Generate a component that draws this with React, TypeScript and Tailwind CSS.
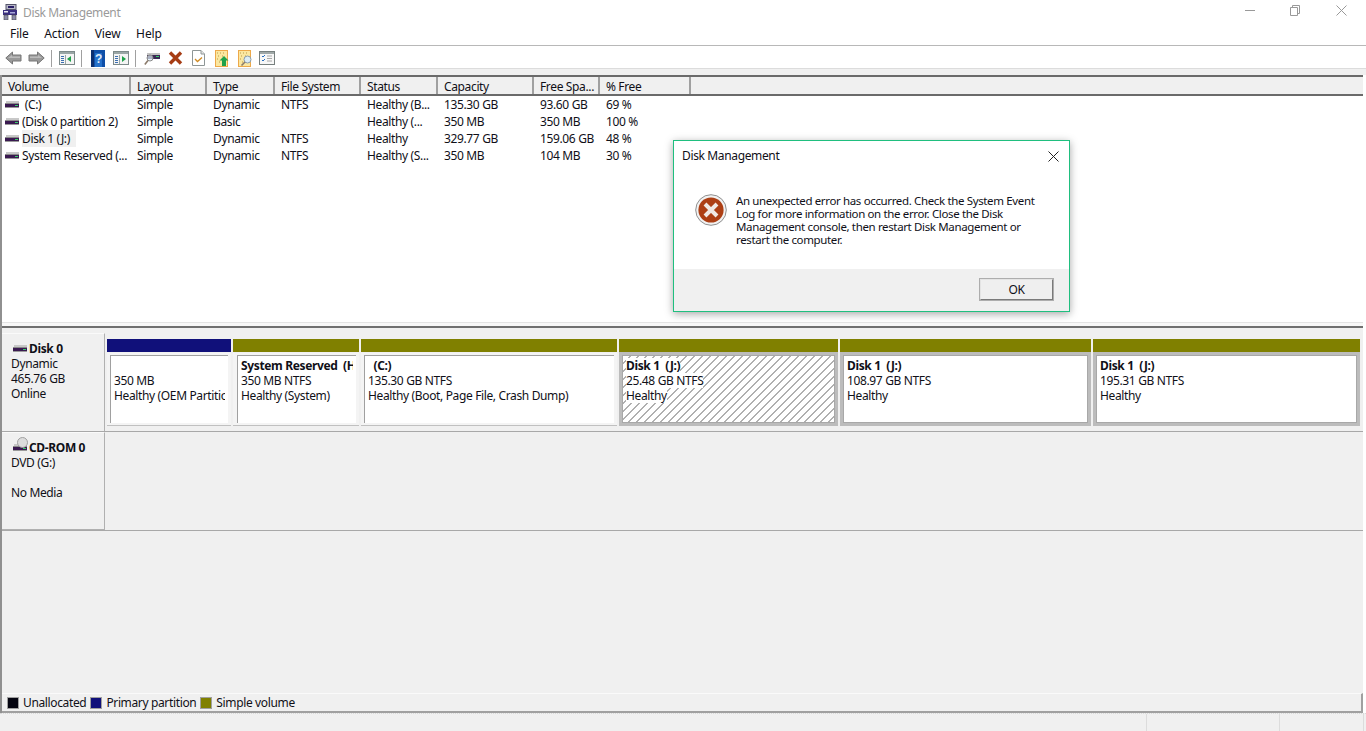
import React from "react";

const DiskIcon = ({ className = "" }: { className?: string }) => (
  <svg width="16" height="10" viewBox="0 0 16 10" className={className}>
    <rect x="1" y="1" width="13" height="2" fill="#c8c8c8" />
    <rect x="0" y="3" width="14" height="1" fill="#8a8a8a" />
    <rect x="0" y="4" width="14" height="3" fill="#3a1a50" />
    <rect x="10" y="5" width="3" height="1" fill="#35d06a" />
    <rect x="0" y="7" width="14" height="1" fill="#9a9a9a" />
  </svg>
);

const AppIcon = () => (
  <svg width="16" height="16" viewBox="0 0 16 16">
    <rect x="4" y="0.5" width="10" height="5" fill="#b8b8c8" stroke="#55556a" />
    <rect x="6" y="2" width="6" height="2" fill="#2a1f66" />
    <rect x="1" y="6" width="14" height="5" fill="#3b2f80" />
    <rect x="2" y="7" width="4" height="1.5" fill="#e8e8f0" />
    <rect x="8" y="8" width="5" height="1.5" fill="#a8a8d8" />
    <rect x="2" y="11" width="4" height="5" fill="#8c8ca8" stroke="#444" strokeWidth="0.6" />
    <rect x="10" y="11" width="4" height="5" fill="#8c8ca8" stroke="#444" strokeWidth="0.6" />
  </svg>
);

const Arrow = ({ flip }: { flip?: boolean }) => (
  <svg width="17" height="14" viewBox="0 0 17 14" className={flip ? "-scale-x-100" : ""}>
    <path d="M0.8 7 L7.5 1 V4 H16 V10 H7.5 V13 Z" fill="#9a9a9a" stroke="#767676" strokeWidth="1" />
    <path d="M3 7 L7 4 V5.5 H15 V7 Z" fill="#bcbcbc" />
  </svg>
);

const Sep = () => <div className="w-px h-[17px] bg-[#a0a0a0]" />;

const WindowPane = ({ help }: { help?: boolean }) => (
  <svg width="16" height="14" viewBox="0 0 16 14">
    <rect x="0.5" y="0.5" width="15" height="13" fill="#f4f4f4" stroke="#7d8a8a" />
    <rect x="1" y="1" width="14" height="2" fill="#9aa6a6" />
    <rect x="2" y="5" width="3" height="1" fill="#3c6fb0" />
    <rect x="2" y="7" width="3" height="1" fill="#3c6fb0" />
    <rect x="2" y="9" width="3" height="1" fill="#3c6fb0" />
    <rect x="2" y="11" width="3" height="1" fill="#3c6fb0" />
    <rect x="6" y="4" width="1" height="9" fill="#9aa6a6" />
    <path d={help ? "M9 5 L13 8 L9 11 Z" : "M12 5 L8 8 L12 11 Z"} fill="#1fa24a" />
  </svg>
);

const HelpIcon = () => (
  <svg width="14" height="17" viewBox="0 0 14 17">
    <rect width="14" height="17" fill="#0f4fa8" />
    <rect x="0" y="0" width="3" height="17" fill="#0b2f70" />
    <path d="M4 3 H11 V17 H4 Z" fill="#2f7fd8" opacity="0.7" />
    <text x="7.5" y="13" fontSize="12" fontWeight="700" fill="#dfeaf8" textAnchor="middle" fontFamily="Liberation Sans, sans-serif">?</text>
  </svg>
);

const DiskSearch = () => (
  <svg width="16" height="15" viewBox="0 0 16 15">
    <rect x="3" y="2" width="13" height="2" fill="#c4c4c4" />
    <rect x="3" y="4" width="13" height="4" fill="#3a2a55" />
    <rect x="12" y="5" width="3" height="1" fill="#35d06a" />
    <circle cx="6" cy="7" r="3" fill="#dcecf5" fillOpacity="0.7" stroke="#8a8a8a" />
    <path d="M4 9.5 L0.8 13.5" stroke="#8a7a6a" strokeWidth="1.6" />
  </svg>
);

const BigX = () => (
  <svg width="15" height="14" viewBox="0 0 15 14">
    <path d="M2 1.5 L13 12.5 M13 1.5 L2 12.5" stroke="#a63c14" strokeWidth="3.4" />
  </svg>
);

const DocCheck = () => (
  <svg width="13" height="16" viewBox="0 0 13 16">
    <path d="M0.5 0.5 H9 L12.5 4 V15.5 H0.5 Z" fill="#fff" stroke="#8e9696" />
    <path d="M9 0.5 V4 H12.5" fill="#e4e4e4" stroke="#8e9696" />
    <path d="M3 9 L5.5 11.5 L10 7.5" fill="none" stroke="#d08a22" strokeWidth="1.3" />
  </svg>
);

const YellowDoc = ({ search }: { search?: boolean }) => (
  <svg width="15" height="17" viewBox="0 0 15 17">
    <rect x="0.5" y="0.5" width="12" height="16" fill="#fbe7a0" stroke="#eda94a" />
    <path d="M2 3h1M5 3h1M8 3h1M3 6h1M7 6h1M2 9h1M9 9h1M4 12h1" stroke="#b79a4a" strokeWidth="1" />
    {search ? (
      <>
        <circle cx="9.5" cy="9.5" r="3.5" fill="#dcecf5" stroke="#8a9ca8" />
        <path d="M7 12 L3.5 15.5" stroke="#8a7a6a" strokeWidth="1.6" />
      </>
    ) : (
      <path d="M9 6 L13.5 10.5 H11 V16 H7 V10.5 H4.5 Z" fill="#1fa24a" />
    )}
  </svg>
);

const ListIcon = () => (
  <svg width="16" height="14" viewBox="0 0 16 14">
    <rect x="0.5" y="0.5" width="15" height="13" fill="#f7f7f7" stroke="#77807f" />
    <rect x="1" y="1" width="14" height="2" fill="#a0a8a8" />
    <path d="M3 5 l1 1 l2 -2 M3 9 l1 1 l2 -2" stroke="#2a6fc0" fill="none" />
    <path d="M8 5 h5 M8 7.5 h5 M8 10 h5" stroke="#a8a8a8" />
  </svg>
);

const ErrorIcon = () => (
  <svg width="32" height="32" viewBox="0 0 32 32">
    <circle cx="16" cy="16" r="15.3" fill="#f2f2f2" stroke="#8f8f8f" />
    <circle cx="16" cy="16" r="12.6" fill="#ad3f14" />
    <path d="M10 10 L22 22 M22 10 L10 22" stroke="#f0e9e4" strokeWidth="4" />
  </svg>
);

const columns: [string, string][] = [
  ["Volume", "w-[129px]"],
  ["Layout", "w-[76px]"],
  ["Type", "w-[68px]"],
  ["File System", "w-[86px]"],
  ["Status", "w-[77px]"],
  ["Capacity", "w-[96px]"],
  ["Free Spa...", "w-[66px]"],
  ["% Free", "w-[91px]"],
];

const rows = [
  ["\u00a0(C:)", "Simple", "Dynamic", "NTFS", "Healthy (B...", "135.30 GB", "93.60 GB", "69 %"],
  ["(Disk 0 partition 2)", "Simple", "Basic", "", "Healthy (...", "350 MB", "350 MB", "100 %"],
  ["Disk 1 (J:)", "Simple", "Dynamic", "NTFS", "Healthy", "329.77 GB", "159.06 GB", "48 %"],
  ["System Reserved (...", "Simple", "Dynamic", "NTFS", "Healthy (S...", "350 MB", "104 MB", "30 %"],
];

const Partition = ({
  size,
  bar,
  title,
  line2,
  line3,
  inset = "pl-[3px]",
}: {
  size: string;
  bar: string;
  title?: string;
  line2: string;
  line3: string;
  inset?: string;
}) => (
  <div className={"flex flex-col shrink-0 h-[87px] mr-[2px] " + size}>
    <div className={"h-[13px] shrink-0 " + bar} />
    <div className={"mt-px h-[73px] bg-[#f4f4f4] border-b border-[#c0c0c0] pt-[2px] pr-[3px] pb-[2px] " + inset}>
      <div className="h-full bg-white border-l border-t border-[#a0a0a0] pl-[3px] pt-[2px] pr-[3px] whitespace-nowrap leading-[15px]">
        <div className="overflow-hidden">
          <div className="font-bold h-[15px]">{title}</div>
          <div>{line2}</div>
          <div>{line3}</div>
        </div>
      </div>
    </div>
  </div>
);

const Volume = ({
  size,
  line2,
  hatch,
  last,
}: {
  size: string;
  line2: string;
  hatch?: boolean;
  last?: boolean;
}) => (
  <div className={"flex flex-col shrink-0 h-[87px] " + size + (last ? "" : " mr-[2px]")}>
    <div className="h-[13px] shrink-0 bg-[#808000]" />
    <div className="h-[74px] border-[3px] border-[#bcbcbc]">
      <div
        className={
          "h-full border border-[#a8a8a8] pl-[3px] pt-[2px] leading-[15px] whitespace-nowrap overflow-hidden " +
          (hatch
            ? "bg-[repeating-linear-gradient(135deg,#ffffff_0px,#ffffff_4.8px,#b0b0b0_4.8px,#b0b0b0_5.66px)]"
            : "bg-white")
        }
      >
        <div className="font-bold w-fit bg-white">Disk 1&nbsp; (J:)</div>
        <div className="w-fit bg-white">{line2}</div>
        <div className="w-fit bg-white">Healthy</div>
      </div>
    </div>
  </div>
);

export default function App() {
  return (
    <div className="relative w-[1366px] h-[731px] overflow-hidden bg-white flex flex-col font-['Noto_Sans',sans-serif] text-[12px] tracking-[-0.36px] text-[#101018]">
      {/* title */}
      <div className="h-[23px] flex items-center pl-[2px] shrink-0">
        <AppIcon />
        <span className="ml-[5px] text-[#9a9a9a] pt-[2px]">Disk Management</span>
        <div className="ml-auto flex items-center h-full pb-[2px]">
          <svg width="11" height="11" viewBox="0 0 11 11" className="mr-[34px]"><path d="M0 5.5 H10" stroke="#999" /></svg>
          <svg width="11" height="11" viewBox="0 0 11 11" className="mr-[35px]"><path d="M0.5 2.5 H7.5 V10.5 H0.5 Z M2.5 2.5 V0.5 H9.5 V8.5 H7.5" fill="none" stroke="#999" /></svg>
          <svg width="11" height="11" viewBox="0 0 11 11" className="mr-[19px]"><path d="M0.5 0.5 L10.5 10.5 M10.5 0.5 L0.5 10.5" stroke="#999" /></svg>
        </div>
      </div>
      {/* menu */}
      <div className="h-[22px] flex items-center pl-[10px] gap-[15.5px] shrink-0 tracking-[-0.1px]">
        <span>File</span>
        <span>Action</span>
        <span>View</span>
        <span>Help</span>
      </div>
      {/* toolbar */}
      <div className="h-[23px] border-t border-[#b8b8b8] flex items-center shrink-0 pl-[5px] pt-[2px]">
        <Arrow />
        <div className="ml-[6px]"><Arrow flip /></div>
        <div className="ml-[6px] flex"><Sep /></div>
        <div className="ml-[7px] flex"><WindowPane /></div>
        <div className="ml-[6px] flex"><Sep /></div>
        <div className="ml-[9px] flex"><HelpIcon /></div>
        <div className="ml-[8px] flex"><WindowPane help /></div>
        <div className="ml-[6px] flex"><Sep /></div>
        <div className="ml-[8px] flex"><DiskSearch /></div>
        <div className="ml-[8px] flex"><BigX /></div>
        <div className="ml-[9px] flex"><DocCheck /></div>
        <div className="ml-[10px] flex"><YellowDoc /></div>
        <div className="ml-[8px] flex"><YellowDoc search /></div>
        <div className="ml-[6px] flex"><ListIcon /></div>
      </div>
      {/* band */}
      <div className="h-[7px] shrink-0 bg-[#f0f0f0] border-t border-[#dcdcdc]" />
      {/* main */}
      <div className="flex-1 min-h-0 flex flex-col border-l-2 border-[#909090] bg-[#f0f0f0] mr-[3px]">
        {/* list */}
        <div className="h-[247px] shrink-0 bg-white border-t-2 border-[#6a6a6a] flex flex-col">
          <div className="h-[19px] flex bg-[#f0f0f0] border-b-2 border-[#6a6a6a] shrink-0">
            {columns.map(([c, w]) => (
              <div key={c} className={"shrink-0 pl-[6px] leading-[19px] border-r-2 border-[#a0a0a0] whitespace-nowrap " + w}>
                {c}
              </div>
            ))}
          </div>
          <div>
            {rows.map((r, i) => (
              <div key={i} className="h-[17px] flex items-center leading-[17px]">
                {r.map((c, j) => (
                  <div key={j} className={"shrink-0 whitespace-nowrap " + columns[j][1] + (j === 0 ? " flex items-center pl-[3px]" : " pl-[6px]")}>
                    {j === 0 && <DiskIcon className="mr-[1px] shrink-0" />}
                    {j === 0 ? <span className={i === 2 ? "bg-[#f0f0f0] pr-[6px]" : ""}>{c}</span> : c}
                  </div>
                ))}
              </div>
            ))}
          </div>
        </div>
        {/* splitter */}
        <div className="h-[6px] shrink-0 bg-[#f8f8f8] border-t border-[#e4e4e4] border-b-2 border-b-[#707070]" />
        {/* disks */}
        <div className="h-[5px] shrink-0" />
        <div className="flex-1 min-h-0 flex flex-col">
          <div className="h-[99px] flex shrink-0 border-b border-[#a8a8a8]">
            <div className="w-[103px] shrink-0 border-t border-r border-[#fafafa] border-r-[#b0b0b0] pl-[9px] pt-[7px] leading-[15px]">
              <div className="flex items-center font-bold h-[15px]"><DiskIcon className="ml-[2px]" />Disk 0</div>
              <div>Dynamic</div>
              <div>465.76 GB</div>
              <div>Online</div>
            </div>
            <div className="flex-1 flex pl-[2px] pt-[6px] min-w-0">
              <Partition size="w-[124px]" bar="bg-[#10107a]" line2="350 MB" line3="Healthy (OEM Partition)" />
              <Partition size="w-[126px]" bar="bg-[#808000]" inset="pl-[4px]" title={"System Reserved\u00a0 (H:)"} line2="350 MB NTFS" line3="Healthy (System)" />
              <Partition size="w-[256px]" bar="bg-[#808000]" title={"\u00a0 (C:)"} line2="135.30 GB NTFS" line3="Healthy (Boot, Page File, Crash Dump)" />
              <Volume size="w-[219px]" line2="25.48 GB NTFS" hatch />
              <Volume size="w-[251px]" line2="108.97 GB NTFS" />
              <Volume size="w-[267px]" line2="195.31 GB NTFS" last />
            </div>
          </div>
          <div className="h-[99px] flex shrink-0 border-b border-[#a8a8a8]">
            <div className="w-[103px] shrink-0 border-t border-r border-[#fafafa] border-r-[#b0b0b0] border-b border-b-[#b0b0b0] pl-[9px] pt-[7px] leading-[15px]">
              <div className="flex items-center font-bold h-[15px]">
                <span className="relative ml-[2px] flex">
                  <DiskIcon />
                  <span className="absolute -top-[6px] left-[4px] w-[11px] h-[11px] rounded-full border border-[#a0a0a0] bg-[#dcdcdc]" />
                </span>
                CD-ROM 0
              </div>
              <div>DVD (G:)</div>
              <div className="h-[15px]" />
              <div>No Media</div>
            </div>
          </div>
          <div className="flex-1" />
          {/* legend */}
          <div className="h-[20px] shrink-0 border-t border-[#fafafa] border-b-2 border-b-[#a0a0a0] border-r-2 border-r-[#a0a0a0] flex items-center pl-[5px]">
            <span className="w-[12px] h-[12px] bg-[#050510] border border-[#a0a0a0]" />
            <span className="ml-[4px]">Unallocated</span>
            <span className="ml-[4px] w-[12px] h-[12px] bg-[#10107a] border border-[#a0a0a0]" />
            <span className="ml-[4px]">Primary partition</span>
            <span className="ml-[4px] w-[12px] h-[12px] bg-[#808000] border border-[#a0a0a0]" />
            <span className="ml-[4px]">Simple volume</span>
          </div>
        </div>
      </div>
      {/* status */}
      <div className="h-[18px] shrink-0 bg-[#f0f0f0] border-t border-dotted border-[#d8d8d8] flex justify-end pr-[2px]">
        <div className="w-[133px] border-l border-[#dcdcdc]" />
        <div className="w-[85px] border-x border-[#dcdcdc]" />
      </div>

      {/* dialog */}
      <div className="absolute left-[673px] top-[140px] w-[397px] h-[172px] bg-white border border-[#1fbf7f] shadow-[0_2px_8px_rgba(0,0,0,0.35)] flex flex-col">
        <div className="h-[30px] flex items-center pl-[8px] shrink-0">
          <span>Disk Management</span>
          <svg width="11" height="11" viewBox="0 0 11 11" className="ml-auto mr-[10px]"><path d="M0.5 0.5 L10.5 10.5 M10.5 0.5 L0.5 10.5" stroke="#222" /></svg>
        </div>
        <div className="flex-1 flex pt-[23px] pl-[21px]">
          <div className="shrink-0"><ErrorIcon /></div>
          <div className="ml-[9px] text-[11.5px] leading-[13px] whitespace-nowrap">
            An unexpected error has occurred. Check the System Event<br />
            Log for more information on the error. Close the Disk<br />
            Management console, then restart Disk Management or<br />
            restart the computer.
          </div>
        </div>
        <div className="h-[42px] shrink-0 bg-[#f0f0f0] flex items-start justify-end pr-[15px] pt-[9px]">
          <button className="w-[75px] h-[23px] bg-[#efefef] border-2 border-[#7a7a7a] border-t-[#e4e4e4] border-l-[#e4e4e4] outline outline-1 outline-[#adadad] -outline-offset-1 text-[12px] leading-none">OK</button>
        </div>
      </div>
    </div>
  );
}
